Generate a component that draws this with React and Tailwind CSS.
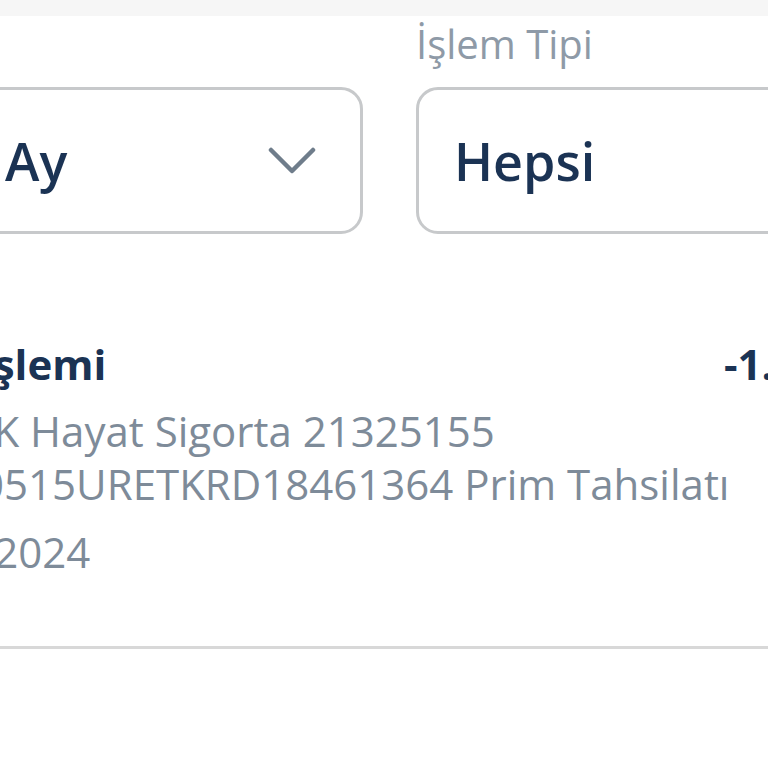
import React from 'react';

const font = { fontFamily: '"Open Sans", "Noto Sans", sans-serif' };

const Chevron = () => (
    <svg width="48" height="28" viewBox="0 0 48 28" fill="none" className="shrink-0">
        <path d="M3 3 L24 24 L45 3" stroke="#6f7d8b" strokeWidth="4.5" strokeLinecap="round" strokeLinejoin="round" />
    </svg>
);

export default function App() {
    return (
        <div className="w-[768px] h-[768px] overflow-hidden bg-white" style={font}>
            {/* top app bar edge */}
            <div className="h-[16px] bg-[#f6f6f6]"></div>

            {/* Filters */}
            <div className="flex items-end gap-[53px] -ml-[180px] pt-[1px] whitespace-nowrap">
                <div className="w-[543px] shrink-0 h-[147px] border-[3.5px] border-[#c7c9cb] rounded-[22px] flex items-center justify-between pl-[182px] pr-[44px]">
                    <span className="text-[52px] font-semibold text-[#1b3354]">Ay</span>
                    <Chevron />
                </div>
                <div className="flex flex-col w-[420px] shrink-0">
                    <span className="text-[40px] leading-[54px] text-[#8e9aa7]">İşlem Tipi</span>
                    <div className="mt-[16px] h-[147px] border-[3.5px] border-[#c7c9cb] rounded-[22px] flex items-center pl-[35px]">
                        <span className="text-[52px] font-semibold text-[#1b3354]">Hepsi</span>
                    </div>
                </div>
            </div>

            {/* Transaction row */}
            <div className="mt-[102px] flex items-start -ml-[86px] whitespace-nowrap">
                <div className="w-[810px] shrink-0 flex flex-col">
                    <span className="text-[42px] leading-[56px] font-bold text-[#1b3354] -ml-[96px]">Ödeme İşlemi</span>
                    <div className="mt-[12px] text-[42px] leading-[53px] text-[#7e8b99]">
                        <div>HALK Hayat Sigorta 21325155</div>
                        <div className="-ml-[30px]">20240515URETKRD18461364 Prim Tahsilatı</div>
                    </div>
                    <div className="mt-[15px] text-[42px] leading-[53px] text-[#7e8b99] -ml-[38px]">15.05.2024</div>
                </div>
                <span className="text-[42px] leading-[56px] font-bold text-[#1b3354]">-1.250,00 TL</span>
            </div>

            {/* divider */}
            <div className="mt-[68px] h-[3px] bg-[#d8d8d8]"></div>
        </div>
    );
}
